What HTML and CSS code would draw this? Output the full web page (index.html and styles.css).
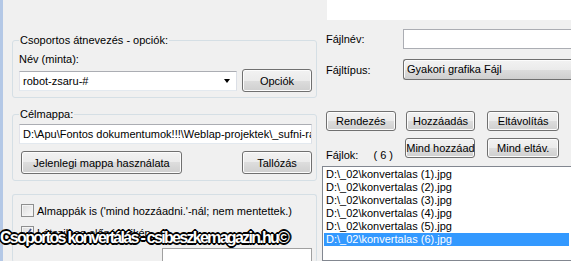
FILE: index.html
```html
<!DOCTYPE html>
<html>
<head>
<meta charset="utf-8">
<link rel="stylesheet" href="styles.css">
</head>
<body>
<div class="app">
  <div class="edge"></div>
  <div class="left">
    <fieldset class="group g1">
      <legend>Csoportos átnevezés - opciók:</legend>
      <div class="label">Név (minta):</div>
      <div class="row">
        <div class="combo"><span>robot-zsaru-#</span><span class="arrow"></span></div>
        <div class="btn btn-side">Opciók</div>
      </div>
    </fieldset>
    <fieldset class="group g2">
      <legend>Célmappa:</legend>
      <div class="textbox">D:\Apu\Fontos dokumentumok!!!\Weblap-projektek\_sufni-raktar\konvertalas</div>
      <div class="row row-btns">
        <div class="btn btn-cur">Jelenlegi mappa használata</div>
        <div class="btn btn-side">Tallózás</div>
      </div>
    </fieldset>
    <div class="group g3">
      <div class="check"><span class="box"></span><span>Almappák is ('mind hozzáadni.'-nál; nem mentettek.)</span></div>
      <div class="check"><span class="box"><svg viewBox="0 0 13 13" width="13" height="13"><path d="M3 6.5 L5.5 9.5 L10 3" fill="none" stroke="#3a4e8c" stroke-width="1.8"/></svg></span><span>Látszik az előnézetikép</span></div>
      <div class="preview"></div>
    </div>
  </div>
  <div class="right">
    <div class="topbox"></div>
    <div class="field f-name"><span class="flabel">Fájlnév:</span><div class="tb"></div></div>
    <div class="field f-type"><span class="flabel">Fájltípus:</span><div class="ddl">Gyakori grafika Fájl</div></div>
    <div class="btnrow r1">
      <div class="btn sb">Rendezés</div>
      <div class="btn sb">Hozzáadás</div>
      <div class="btn sb sb-wide">Eltávolítás</div>
    </div>
    <div class="btnrow r2">
      <div class="files">Fájlok:<span class="count">( 6 )</span></div>
      <div class="btn sb">Mind hozzáad</div>
      <div class="btn sb sb-wide">Mind eltáv.</div>
    </div>
    <div class="list">
      <div class="item">D:\_02\konvertalas (1).jpg</div>
      <div class="item">D:\_02\konvertalas (2).jpg</div>
      <div class="item">D:\_02\konvertalas (3).jpg</div>
      <div class="item">D:\_02\konvertalas (4).jpg</div>
      <div class="item">D:\_02\konvertalas (5).jpg</div>
      <div class="item sel">D:\_02\konvertalas (6).jpg</div>
    </div>
  </div>
</div>
<div class="overlay">Csoportos konvertálás - csibeszkemagazin.hu©</div>
</body>
</html>
```

FILE: styles.css
```css
html, body {
  margin: 0;
  padding: 0;
}
body {
  width: 571px;
  height: 261px;
  overflow: hidden;
  position: relative;
  background: #f0f0f0;
  font-family: "Liberation Sans", Arial, sans-serif;
  font-size: 11px;
  color: #000;
}
.app {
  display: flex;
  height: 261px;
  overflow: hidden;
}
.edge {
  width: 3px;
  flex: none;
  background: #b4c8e6;
}
.left {
  width: 315px;
  flex: none;
  padding: 34px 0 0 9px;
  box-sizing: border-box;
  overflow: hidden;
}
.group {
  box-sizing: border-box;
  width: 305px;
  margin: 0;
  border: 1px solid #d5dfe5;
  border-radius: 3px;
  padding: 0 4px 0 6px;
  min-width: 0;
}
.group legend {
  padding: 0 1px;
  line-height: 13px;
}
.label {
  margin-top: 6px;
  line-height: 13px;
}
.row {
  display: flex;
  justify-content: space-between;
  align-items: center;
  margin-top: 3px;
}
.g1 {
  padding-bottom: 5px;
}
.combo {
  box-sizing: border-box;
  width: 218px;
  height: 20px;
  background: #fff;
  border: 1px solid #abadb3;
  border-color: #abadb3 #dbdfe6 #e3e9ef #e2e3ea;
  display: flex;
  align-items: center;
  justify-content: space-between;
  padding: 0 6px 0 3px;
}
.arrow {
  width: 0;
  height: 0;
  border-left: 3.5px solid transparent;
  border-right: 3.5px solid transparent;
  border-top: 4px solid #000;
}
.btn {
  box-sizing: border-box;
  height: 23px;
  border: 1px solid #707070;
  border-radius: 3px;
  background: linear-gradient(#f2f2f2 0%, #ebebeb 50%, #dddddd 50%, #cfcfcf 100%);
  box-shadow: inset 0 0 0 1px #fcfcfc;
  display: flex;
  align-items: center;
  justify-content: center;
  white-space: nowrap;
}
.btn-side {
  width: 70px;
}
.g2 {
  margin-top: 10px;
  padding-bottom: 6px;
}
.textbox {
  box-sizing: border-box;
  margin-top: 3px;
  height: 20px;
  background: #fff;
  border: 1px solid #abadb3;
  border-color: #abadb3 #dbdfe6 #e3e9ef #e2e3ea;
  padding: 0 3px;
  line-height: 18px;
  white-space: nowrap;
  overflow: hidden;
}
.row-btns {
  margin-top: 7px;
  padding-left: 2px;
}
.btn-cur {
  width: 161px;
}
.g3 {
  margin-top: 13px;
  height: 68px;
  border-bottom: none;
  padding-top: 9px;
  padding-left: 8px;
}
.check {
  display: flex;
  align-items: center;
  height: 13px;
  margin-bottom: 9px;
  gap: 3px;
}
.box {
  box-sizing: border-box;
  width: 13px;
  height: 13px;
  border: 1px solid #8e8f8f;
  background: linear-gradient(135deg, #dcdcdc, #fbfbfb);
  box-shadow: inset 0 0 0 1px #f4f4f4;
  display: block;
  flex: none;
}
.box svg {
  display: block;
  margin: -1px;
}
.preview {
  margin-top: 4px;
  margin-left: 141px;
  height: 20px;
  background: #fff;
  border: 1px solid #a0a0a0;
}
.right {
  flex: 1;
  padding-left: 4px;
  display: flex;
  flex-direction: column;
  overflow: hidden;
}
.topbox {
  height: 20px;
  flex: none;
  margin-left: 5px;
  background: #fff;
}
.field {
  display: flex;
  align-items: center;
  margin-left: 4px;
  flex: none;
}
.flabel {
  width: 77px;
  flex: none;
}
.f-name {
  margin-top: 9px;
  height: 20px;
}
.tb {
  flex: 1;
  height: 20px;
  box-sizing: border-box;
  background: #fff;
  border: 1px solid #abadb3;
  border-right: none;
}
.f-type {
  margin-top: 10px;
  height: 21px;
}
.ddl {
  flex: 1;
  box-sizing: border-box;
  height: 21px;
  border: 1px solid #707070;
  border-right: none;
  border-radius: 3px 0 0 3px;
  background: linear-gradient(#f2f2f2 0%, #ebebeb 50%, #dddddd 50%, #cfcfcf 100%);
  box-shadow: inset 1px 1px 0 #fcfcfc;
  padding-left: 3px;
  line-height: 19px;
}
.btnrow {
  display: flex;
  margin-left: 4px;
  flex: none;
}
.r1 {
  margin-top: 31px;
}
.sb {
  height: 20px;
  width: 70px;
  margin-right: 12px;
}
.r1 .sb:first-child {
  margin-right: 10px;
}
.sb-wide {
  width: 72px;
}
.r2 {
  margin-top: 7px;
  align-items: flex-end;
}
.files {
  width: 80px;
  line-height: 13px;
  margin-bottom: -4px;
}
.count {
  margin-left: 15px;
}
.list {
  margin-top: 8px;
  flex: 1;
  background: #fff;
  border: 1px solid #828790;
  border-right: none;
  padding: 1px 2px 0 1px;
}
.item {
  height: 13px;
  line-height: 13px;
  padding-left: 2px;
  white-space: nowrap;
}
.item.sel {
  background: #3399ff;
  color: #fff;
}
.overlay {
  position: absolute;
  left: 0;
  top: 229px;
  font-weight: bold;
  font-size: 16px;
  line-height: 18px;
  letter-spacing: -1.7px;
  color: #fff;
  white-space: nowrap;
  text-shadow: -1px -1px 0 #000, 1px -1px 0 #000, -1px 1px 0 #000, 1px 1px 0 #000, 0 -1px 0 #000, 0 1px 0 #000, -1px 0 0 #000, 1px 0 0 #000, 2px 0 0 #000, -2px 0 0 #000, 0 2px 0 #000, 0 -2px 0 #000;
}
```
